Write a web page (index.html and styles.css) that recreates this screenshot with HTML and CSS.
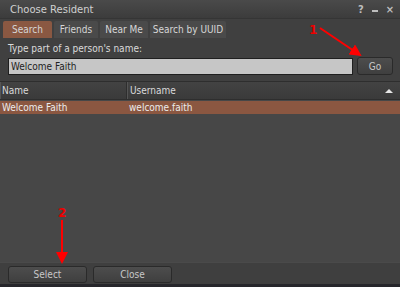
FILE: index.html
```html
<!DOCTYPE html>
<html lang="en">
<head>
    <meta charset="UTF-8">
    <title>Choose Resident</title>
    <link rel="stylesheet" href="styles.css">
</head>
<body>
    <div class="floater">
        <div class="titlebar">
            <span class="title">Choose Resident</span>
            <div class="title-btns">
                <span>?</span>
                <span class="minimize"></span>
                <span>×</span>
            </div>
        </div>

        <div class="tabs">
            <div class="tab active">Search</div>
            <div class="tab">Friends</div>
            <div class="tab">Near Me</div>
            <div class="tab">Search by UUID</div>
        </div>

        <div class="search-panel">
            <label class="label">Type part of a person's name:</label>
            <div class="search-row">
                <input type="text" class="search-box" value="Welcome Faith">
                <button class="btn go">Go</button>
            </div>
        </div>

        <div class="list">
            <div class="list-header">
                <div class="col col-name">Name</div>
                <div class="col col-user">Username <span class="sort"></span></div>
            </div>
            <div class="list-row selected">
                <div class="col col-name">Welcome Faith</div>
                <div class="col col-user">welcome.faith</div>
            </div>
        </div>

        <div class="footer">
            <button class="btn wide">Select</button>
            <button class="btn wide">Close</button>
        </div>
        <div class="bottom-edge"></div>

        <!-- annotation arrows drawn over the screenshot -->
        <svg class="notes" width="400" height="287" viewBox="0 0 400 287">
            <defs>
                <marker id="head" markerWidth="6" markerHeight="6" refX="5" refY="3" orient="auto" markerUnits="strokeWidth">
                    <path d="M0,0 L6,3 L0,6 z" fill="#f00"/>
                </marker>
            </defs>
            <text x="309" y="34" class="note">1</text>
            <line x1="320" y1="28" x2="360" y2="55" stroke="#f00" stroke-width="2" marker-end="url(#head)"/>
            <text x="58" y="217" class="note">2</text>
            <line x1="62" y1="220" x2="62" y2="262" stroke="#f00" stroke-width="2" marker-end="url(#head)"/>
        </svg>
    </div>
</body>
</html>
```

FILE: styles.css
```css
body {
    margin: 0;
    font-family: "DejaVu Sans Condensed", "DejaVu Sans", sans-serif;
    font-size: 10px;
    background: #2b2b30;
}
.floater {
    position: relative;
    width: 400px;
    height: 287px;
    background: #404040;
    color: #e6e6e6;
    display: flex;
    flex-direction: column;
    overflow: hidden;
}
.titlebar {
    height: 18px;
    display: flex;
    align-items: center;
    justify-content: space-between;
    padding: 0 6px 0 10px;
    background: linear-gradient(#4a4a4a, #3c3c3c);
    border-bottom: 1px solid #353535;
}
.title {
    font-family: "DejaVu Sans", sans-serif;
    font-size: 10px;
    color: #d0d0d0;
}
.title-btns {
    display: flex;
    gap: 8px;
    align-items: center;
    color: #bdbdbd;
    font-weight: bold;
    font-size: 11px;
}
.minimize {
    width: 6px;
    height: 2px;
    margin-top: 4px;
    background: #bdbdbd;
}
.tabs {
    display: flex;
    gap: 2px;
    padding: 2px 3px 0;
    height: 17px;
}
.tab {
    background: #4a4a4a;
    color: #d6d6d6;
    width: 44px;
    text-align: center;
    line-height: 17px;
    border-radius: 2px 2px 0 0;
}
.tab:nth-child(1) { width: 49px; }
.tab:nth-child(3) { width: 48px; }
.tab:nth-child(4) { width: 76px; }
.tab.active {
    background: #8a5842;
}
.search-panel {
    padding: 5px 7px 0 8px;
}
.label {
    display: block;
    color: #dadada;
    margin-bottom: 3px;
}
.search-row {
    display: flex;
    gap: 4px;
    align-items: center;
}
.search-box {
    flex: 1;
    height: 17px;
    box-sizing: border-box;
    border: 1px solid #1f1f1f;
    background: #c6c6c6;
    color: #222;
    font-family: inherit;
    font-size: 10px;
    padding: 0 2px;
}
.btn {
    background: linear-gradient(#4d4d4d, #3f3f3f);
    color: #c8c8c8;
    border: 1px solid #2a2a2a;
    border-radius: 3px;
    font-family: inherit;
    font-size: 10px;
    height: 18px;
    padding: 0;
}
.go {
    width: 36px;
}
.list {
    margin-top: 6px;
    flex: 1;
    background: #474747;
    border-top: 1px solid #2e2e2e;
}
.list-header, .list-row {
    display: flex;
}
.list-header {
    height: 17px;
    background: linear-gradient(#434343, #3a3a3a);
    border-bottom: 1px solid #2e2e2e;
}
.list-header .col {
    line-height: 17px;
    color: #dadada;
    border-left: 1px solid #2e2e2e;
    box-shadow: inset 1px 0 #555;
}
.list-row {
    height: 13px;
    margin-top: 1px;
    background: #8b5741;
}
.list-row .col {
    line-height: 13px;
    color: #ececec;
}
.col-name {
    width: 124px;
    padding-left: 2px;
}
.list-header .col-name {
    border-left: none;
}
.col-user {
    flex: 1;
    padding-left: 3px;
    position: relative;
}
.sort {
    position: absolute;
    right: 7px;
    top: 7px;
    border: 4px solid transparent;
    border-bottom: 4px solid #e6e6e6;
    border-top: none;
    width: 0;
}
.footer {
    height: 22px;
    display: flex;
    gap: 6px;
    align-items: flex-start;
    padding: 3px 8px 0;
    box-sizing: border-box;
    border-top: 1px solid #4a4a4a;
    background: #3f3f3f;
}
.wide {
    width: 79px;
    height: 17px;
}
.bottom-edge {
    height: 3px;
    background: #26262b;
}
.notes {
    position: absolute;
    left: 0;
    top: 0;
}
.note {
    fill: #e00;
    font-family: "DejaVu Sans", sans-serif;
    font-size: 12px;
    font-weight: bold;
}
```
